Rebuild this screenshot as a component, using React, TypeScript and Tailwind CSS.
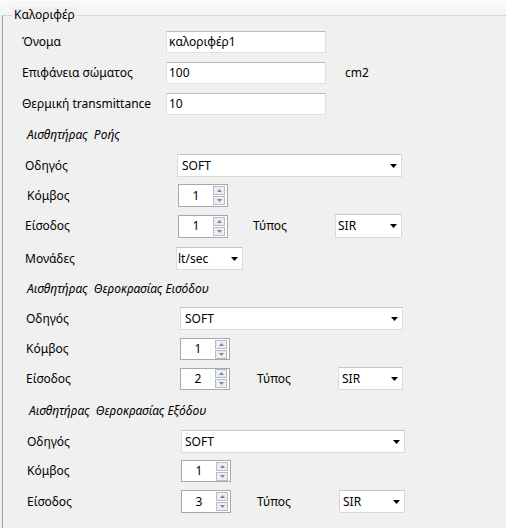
import React from "react";

const Arrow = () => (
  <svg width="7" height="4" viewBox="0 0 7 4" className="shrink-0">
    <path d="M0 0 H7 L3.5 4 Z" fill="#000" />
  </svg>
);

const SpinBtn = ({ up }: { up?: boolean }) => (
  <div className="w-[12px] h-[9px] border border-[#b7bccb] bg-[#eceef2] flex items-center justify-center">
    <svg width="5" height="3" viewBox="0 0 5 3">
      {up ? <path d="M0 3 H5 L2.5 0 Z" fill="#7b86a0" /> : <path d="M0 0 H5 L2.5 3 Z" fill="#7b86a0" />}
    </svg>
  </div>
);

const Spin = ({ v, h }: { v: string; h: string }) => (
  <div className={`w-[50px] ${h} bg-white border border-[#a8a8a8] flex items-center`}>
    <div className="w-[34px] text-center">{v}</div>
    <div className="flex flex-col gap-[1px]">
      <SpinBtn up />
      <SpinBtn />
    </div>
  </div>
);

const TextInput = ({ v }: { v: string }) => (
  <div className="w-[160px] h-[22px] bg-white border border-[#dcdfe4] border-t-[#b9bcc2] flex items-center pl-[2px]">
    {v}
  </div>
);

export default function App() {
  return (
    <div
      className="w-[506px] h-[528px] bg-[#f0f0f0] overflow-hidden text-[12px] leading-none text-black"
      style={{ fontFamily: '"Noto Sans", "DejaVu Sans", sans-serif' }}
    >
      <div className="h-[15px] bg-gradient-to-b from-[#fafafa] to-[#f3f3f3]" />
      <div className="relative ml-[2px] h-[520px] border-l border-t border-l-[#a3a3a3] border-t-[#d6d6d6]">
        <div className="absolute left-[9px] top-[-9px] px-[2px] bg-[#f0f0f0] h-[16px] flex items-center">Καλοριφέρ</div>

        {/* top fields */}
        <div className="mt-[15px] h-[22px] flex items-center pl-[19px]">
          <div className="w-[144px]">Όνομα</div>
          <TextInput v="καλοριφέρ1" />
        </div>
        <div className="mt-[9px] h-[22px] flex items-center pl-[19px]">
          <div className="w-[144px]">Επιφάνεια σώματος</div>
          <TextInput v="100" />
          <div className="ml-[19px]">cm2</div>
        </div>
        <div className="mt-[9px] h-[22px] flex items-center pl-[19px]">
          <div className="w-[144px]">Θερμική transmittance</div>
          <TextInput v="10" />
        </div>

        {/* section 1 */}
        <div className="mt-[12px] h-[16px] flex items-center pl-[24px] italic">Αισθητήρας&nbsp; Ροής</div>
        <div className="mt-[11px] h-[23px] flex items-center pl-[22px]">
          <div className="w-[152px]">Οδηγός</div>
          <div className="w-[225px] h-[23px] bg-white border border-[#dadada] border-t-[#c6c6c6] flex items-center justify-between pl-[4px] pr-[4px]">
            <span>SOFT</span>
            <Arrow />
          </div>
        </div>
        <div className="mt-[7px] h-[23px] flex items-center pl-[24px]">
          <div className="w-[151px]">Κόμβος</div>
          <Spin v="1" h="h-[23px]" />
        </div>
        <div className="mt-[7px] h-[24px] flex items-center pl-[22px]">
          <div className="w-[153px]">Είσοδος</div>
          <Spin v="1" h="h-[23px]" />
          <div className="ml-[25px] w-[82px]">Τύπος</div>
          <div className="w-[67px] h-[24px] bg-white border border-[#dadada] border-t-[#c6c6c6] flex items-center justify-between pl-[2px] pr-[4px]">
            <span>SIR</span>
            <Arrow />
          </div>
        </div>
        <div className="mt-[9px] h-[23px] flex items-center pl-[22px]">
          <div className="w-[151px]">Μονάδες</div>
          <div className="w-[67px] h-[23px] bg-white border border-[#dadada] border-t-[#c6c6c6] flex items-center justify-between pl-[1px] pr-[4px]">
            <span>lt/sec</span>
            <Arrow />
          </div>
        </div>

        {/* section 2 */}
        <div className="mt-[11px] h-[16px] flex items-center pl-[24px] italic">Αισθητήρας&nbsp; Θεροκρασίας Εισόδου</div>
        <div className="mt-[10px] h-[23px] flex items-center pl-[23px]">
          <div className="w-[154px]">Οδηγός</div>
          <div className="w-[223px] h-[23px] bg-white border border-[#dadada] border-t-[#c6c6c6] flex items-center justify-between pl-[4px] pr-[4px]">
            <span>SOFT</span>
            <Arrow />
          </div>
        </div>
        <div className="mt-[8px] h-[22px] flex items-center pl-[23px]">
          <div className="w-[154px]">Κόμβος</div>
          <Spin v="1" h="h-[22px]" />
        </div>
        <div className="mt-[7px] h-[23px] flex items-center pl-[23px]">
          <div className="w-[154px]">Είσοδος</div>
          <Spin v="2" h="h-[22px]" />
          <div className="ml-[27px] w-[81px]">Τύπος</div>
          <div className="w-[65px] h-[23px] bg-white border border-[#dadada] border-t-[#c6c6c6] flex items-center justify-between pl-[3px] pr-[4px]">
            <span>SIR</span>
            <Arrow />
          </div>
        </div>

        {/* section 3 */}
        <div className="mt-[13px] h-[16px] flex items-center pl-[26px] italic">Αισθητήρας&nbsp; Θεροκρασίας Εξόδου</div>
        <div className="mt-[11px] h-[23px] flex items-center pl-[24px]">
          <div className="w-[154px]">Οδηγός</div>
          <div className="w-[224px] h-[23px] bg-white border border-[#dadada] border-t-[#c6c6c6] flex items-center justify-between pl-[3px] pr-[4px]">
            <span>SOFT</span>
            <Arrow />
          </div>
        </div>
        <div className="mt-[7px] h-[22px] flex items-center pl-[24px]">
          <div className="w-[154px]">Κόμβος</div>
          <Spin v="1" h="h-[22px]" />
        </div>
        <div className="mt-[8px] h-[23px] flex items-center pl-[24px]">
          <div className="w-[154px]">Είσοδος</div>
          <Spin v="3" h="h-[23px]" />
          <div className="ml-[26px] w-[82px]">Τύπος</div>
          <div className="w-[66px] h-[23px] bg-white border border-[#dadada] border-t-[#c6c6c6] flex items-center justify-between pl-[3px] pr-[4px]">
            <span>SIR</span>
            <Arrow />
          </div>
        </div>
      </div>
    </div>
  );
}
